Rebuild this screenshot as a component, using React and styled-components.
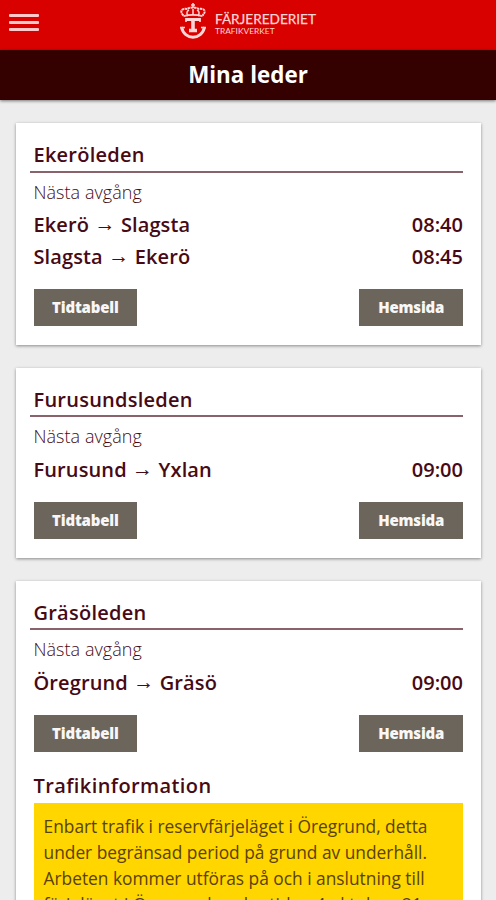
import React from "react";
import styled, { createGlobalStyle } from "styled-components";

const Global = createGlobalStyle`
  * { box-sizing: border-box; }
  html, body { margin: 0; height: 900px; overflow: hidden; background: #ededed; }
  body { font-family: "Open Sans", sans-serif; color: #470a14; }
`;
const Page = styled.div`
  height: 900px;
  overflow: hidden;
`;
const TopBar = styled.header`
  display: grid;
  grid-template-columns: 80px 1fr 80px;
  height: 50px;
  background: #d90000;
`;
const MenuButton = styled.button`
  display: flex;
  flex-direction: column;
  gap: 3.6px;
  width: 39px;
  padding: 13.5px 0 0 9px;
  border: 0;
  background: none;
`;
const MenuLine = styled.span`
  width: 30px;
  height: 3.6px;
  border-radius: 1px;
  background: #ffc9cb;
`;
const Brand = styled.div`
  display: flex;
  justify-content: center;
  gap: 8px;
  color: #ffd5d5;
`;
const Emblem = styled.svg`
  width: 28px;
  height: 42px;
`;
const BrandText = styled.div`
  padding-top: 11px;
  width: 102px;
  font-family: "Lato", sans-serif;
`;
const BrandName = styled.div`
  font-size: 13.6px;
  line-height: 16px;
  white-space: nowrap;
  -webkit-text-stroke: 0.25px currentColor;
`;
const BrandSub = styled.div`
  font-size: 8.4px;
  line-height: 8px;
  white-space: nowrap;
`;
const TitleBar = styled.h1`
  height: 50px;
  margin: 0;
  background: #350000;
  color: #fff;
  font-size: 22.4px;
  line-height: 49px;
  font-weight: 700;
  text-align: center;
  box-shadow: 0 1px 3px rgba(0, 0, 0, 0.5);
`;
const List = styled.main`
  display: flex;
  flex-direction: column;
  gap: 22.4px;
  padding: 23px 15.5px 0 16px;
`;
const Card = styled.section`
  padding: 17px 17.5px 19.4px 17.5px;
  background: #fff;
  box-shadow: 0 1px 3px rgba(0, 0, 0, 0.42);
`;
const CardTitle = styled.h2`
  height: 32.6px;
  margin: 0 0 0 -4px;
  padding-left: 4px;
  border-bottom: 2px solid #8a626a;
  font-size: 20px;
  line-height: 30px;
  font-weight: 600;
  letter-spacing: 0.24px;
`;
const Label = styled.div`
  height: 36.4px;
  font-size: 18px;
  line-height: 39px;
  font-weight: 300;
  letter-spacing: 0.05px;
`;
const Departure = styled.div`
  display: flex;
  justify-content: space-between;
  height: 32px;
  font-size: 20px;
  line-height: 32px;
  font-weight: 600;
`;
const Trip = styled.span`
  letter-spacing: 0.12px;
`;
const Arrow = styled.span`
  font-family: "Liberation Serif", serif;
  font-size: 21px;
  font-weight: 400;
  line-height: 0;
  vertical-align: 1px;
`;
const Actions = styled.div`
  display: flex;
  justify-content: space-between;
  margin-top: 16px;
`;
const Action = styled.button`
  width: 103.7px;
  height: 37px;
  padding: 0;
  border: 0;
  background: #6c655c;
  color: #f8f7f6;
  font: 800 15px "Open Sans", sans-serif;
  letter-spacing: -0.2px;
`;
const InfoTitle = styled.h3`
  margin: 17px 0 1px;
  font-size: 20px;
  line-height: 33px;
  font-weight: 600;
  letter-spacing: 0.4px;
`;
const Notice = styled.p`
  margin: 0;
  padding: 10px;
  background: #ffd600;
  color: #5a4203;
  font-size: 17.35px;
  line-height: 26px;
  white-space: nowrap;
`;

const routes = [
  { name: "Ekeröleden", trips: [["Ekerö", "Slagsta", "08:40"], ["Slagsta", "Ekerö", "08:45"]] },
  { name: "Furusundsleden", trips: [["Furusund", "Yxlan", "09:00"]] },
  {
    name: "Gräsöleden",
    trips: [["Öregrund", "Gräsö", "09:00"]],
    info: [
      "Enbart trafik i reservfärjeläget i Öregrund, detta",
      "under begränsad period på grund av underhåll.",
      "Arbeten kommer utföras på och i anslutning till",
      "färjeläget i Öregrund under tiden 4 oktober–21",
    ],
  },
];

const CrownEmblem = () => (
  <Emblem viewBox="0 0 28 42" fill="none" stroke="currentColor">
    <path d="M14 3v5M12 5h4" strokeWidth="1.6" />
    <path d="M4.500 15.500C0 11 3 8 8 9c3-2 9-2 12 0 5-1 8 2 3.500 6.500" strokeWidth="2" strokeDasharray="2.500 .6" />
    <path d="M9 16c-2-3-1-5 1-6M19 16c2-3 1-5-1-6M14 9v6" strokeWidth="1.5" />
    <path d="M4.500 16.200Q14 13.500 23.500 16.200" strokeWidth="1.8" />
    <path d="M7 18v4M21 18v4" strokeWidth="1.6" />
    <path d="M6.500 19.500h15" strokeWidth="3" />
    <path d="M14 19v12M10 30.500h8" strokeWidth="3.600" />
    <path d="M2.500 27C5 40.500 23 40.500 25.500 27" strokeWidth="3" />
    <path d="M1 27.500h5M22 27.500h5" strokeWidth="1.4" />
  </Emblem>
);

export default function App() {
  return (
    <Page>
      <Global />
      <TopBar>
        <MenuButton aria-label="Meny"><MenuLine /><MenuLine /><MenuLine /></MenuButton>
        <Brand>
          <CrownEmblem />
          <BrandText>
            <BrandName>FÄRJEREDERIET</BrandName>
            <BrandSub>TRAFIKVERKET</BrandSub>
          </BrandText>
        </Brand>
      </TopBar>
      <TitleBar>Mina leder</TitleBar>
      <List>
        {routes.map((r) => (
          <Card key={r.name}>
            <CardTitle>{r.name}</CardTitle>
            <Label>Nästa avgång</Label>
            {r.trips.map(([from, to, time]) => (
              <Departure key={from}>
                <Trip>{from} <Arrow>→</Arrow> {to}</Trip>
                <span>{time}</span>
              </Departure>
            ))}
            <Actions><Action>Tidtabell</Action><Action>Hemsida</Action></Actions>
            {r.info && (
              <>
                <InfoTitle>Trafikinformation</InfoTitle>
                <Notice>{r.info.map((line) => <React.Fragment key={line}>{line}<br /></React.Fragment>)}</Notice>
              </>
            )}
          </Card>
        ))}
      </List>
    </Page>
  );
}
